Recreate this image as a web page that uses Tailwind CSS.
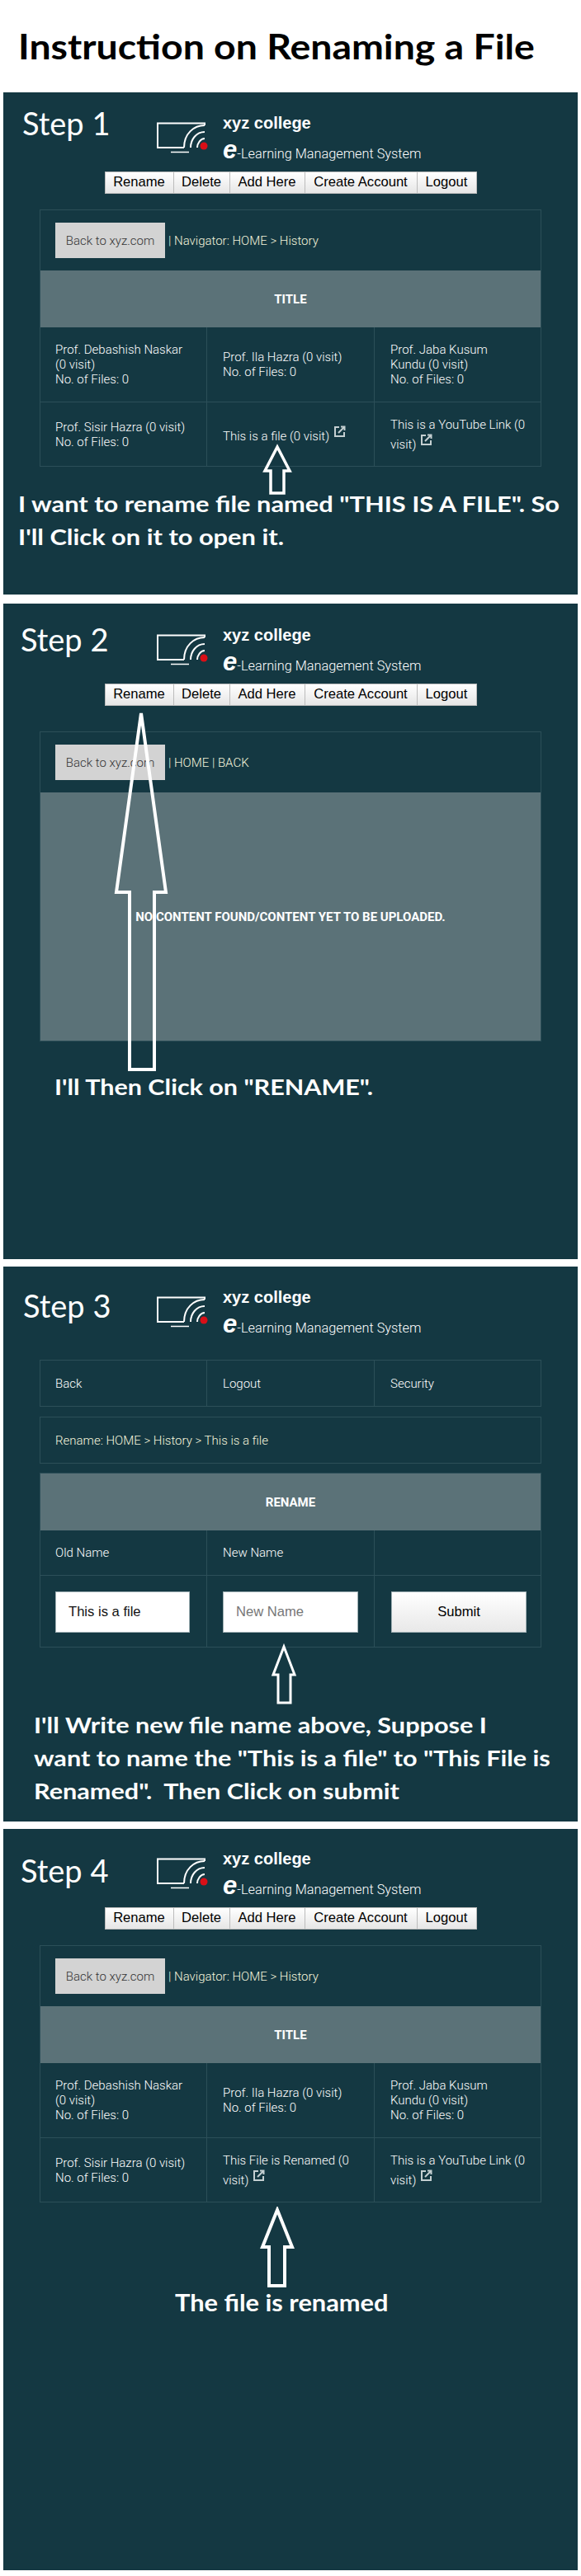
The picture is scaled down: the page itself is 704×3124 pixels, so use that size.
<!doctype html>
<html lang="en">
<head>
<meta charset="utf-8">
<title>Instruction on Renaming a File</title>
<script src="https://cdn.jsdelivr.net/npm/@tailwindcss/browser@4"></script>
</head>
<body class="bg-white w-[704px] font-['Roboto',sans-serif]">
<h1 class="h-[112px] pl-[22px] pt-[30px] font-['Lato',sans-serif] font-bold text-[42px] leading-[52px] text-black"><span class="block w-fit origin-left scale-x-[1.105] whitespace-nowrap">Instruction on Renaming a File</span></h1>

<!-- STEP 1 -->
<section class="relative ml-[4px] w-[696px] h-[609px] bg-[#143842] text-white pt-[25px]">
  <div class="flex h-[71px]">
    <div class="w-[186px] pl-[23px] -mt-[11px] font-['Lato',sans-serif] text-[38px] leading-[46px]">Step 1</div>
    <svg class="mt-[11px] w-[62px] h-[38px]" viewBox="0 0 62 38" fill="none" stroke="#fff"><path stroke-width="2" d="M58 4V1.500H1V31H33"/><path stroke-width="1.500" d="M17 36.500H39"/><path stroke-width="2" d="M33 31C33 14 45 4 58 4M41 31C41 21 48 12 58 12M49 31C49 26 53 20 58 20"/><circle cx="57" cy="29" r="4.500" fill="#d90f17" stroke="none"/></svg>
    <div class="ml-[18px]">
      <div class="font-['Liberation_Sans',sans-serif] font-bold text-[20px] leading-[24px]">xyz college</div>
      <div class="mt-[3px] flex items-baseline leading-[36px] text-[16.300px] font-light"><span class="font-['Liberation_Sans',sans-serif] italic font-bold text-[31px]">e</span><span>-Learning Management System</span></div>
    </div>
  </div>
  <nav class="flex justify-center font-['Liberation_Sans',sans-serif] text-[16.600px] text-black">
    <a class="w-[84px] h-[27px] leading-[24px] text-center border border-[#bcbcbc] bg-linear-to-b from-white to-[#e6e6e6]">Rename</a>
    <a class="w-[68px] h-[27px] leading-[24px] text-center border border-[#bcbcbc] border-l-0 bg-linear-to-b from-white to-[#e6e6e6]">Delete</a>
    <a class="w-[91px] h-[27px] leading-[24px] text-center border border-[#bcbcbc] border-l-0 bg-linear-to-b from-white to-[#e6e6e6]">Add Here</a>
    <a class="w-[136px] h-[27px] leading-[24px] text-center border border-[#bcbcbc] border-l-0 bg-linear-to-b from-white to-[#e6e6e6]">Create Account</a>
    <a class="w-[72px] h-[27px] leading-[24px] text-center border border-[#bcbcbc] border-l-0 bg-linear-to-b from-white to-[#e6e6e6]">Logout</a>
  </nav>
  <div class="mt-[19px] ml-[44px] w-[608px] border border-[#2c4f58] text-[15px] leading-[18px] font-light">
    <div class="h-[73px] pl-[18px] flex items-center text-[#f5f5dc]">
      <a class="w-[133px] h-[43px] bg-[#d3d3d3] text-[#333] flex items-center justify-center">Back to xyz.com</a>
      <span class="ml-[4px]">| Navigator: HOME &gt; History</span>
    </div>
    <div class="h-[69px] bg-[#5b7278] flex items-center justify-center font-bold text-[15px]">TITLE</div>
    <div class="grid grid-cols-[202px_203px_1fr]">
      <div class="h-[91px] px-[18px] border-r border-b border-[#2c4f58] flex items-center"><p>Prof. Debashish Naskar<br>(0 visit)<br>No. of Files: 0</p></div>
      <div class="h-[91px] px-[19px] border-r border-b border-[#2c4f58] flex items-center"><p>Prof. Ila Hazra (0 visit)<br>No. of Files: 0</p></div>
      <div class="h-[91px] px-[19px] border-b border-[#2c4f58] flex items-center"><p>Prof. Jaba Kusum<br>Kundu (0 visit)<br>No. of Files: 0</p></div>
      <div class="h-[77px] px-[18px] border-r border-[#2c4f58] flex items-center"><p>Prof. Sisir Hazra (0 visit)<br>No. of Files: 0</p></div>
      <div class="h-[77px] px-[19px] border-r border-[#2c4f58] flex items-center"><p class="whitespace-nowrap">This is a file (0 visit) <svg class="inline-block align-[3px] ml-[1px] w-[15px] h-[15px]" viewBox="0 0 15 15" fill="none" stroke="#c4cfd1" stroke-width="2"><path d="M7 2H2V13H13V8M6 9L13 2M9 1.500H13.500V6"/></svg></p></div>
      <div class="h-[77px] px-[19px] flex items-center"><p class="leading-[22px] whitespace-nowrap">This is a YouTube Link (0<br>visit) <svg class="inline-block align-[3px] ml-[1px] w-[15px] h-[15px]" viewBox="0 0 15 15" fill="none" stroke="#c4cfd1" stroke-width="2"><path d="M7 2H2V13H13V8M6 9L13 2M9 1.500H13.500V6"/></svg></p></div>
    </div>
  </div>
  <svg class="absolute left-[314px] top-[426px] w-[36px] h-[62px]" viewBox="0 0 36 62" fill="none" stroke="#fff" stroke-width="3.500"><path d="M18 4L33 33H26V60H10V33H3Z"/></svg>
  <div class="mt-[25px] pl-[18px] font-['Lato',sans-serif] font-bold text-[27.500px] leading-[40px]"><p class="w-fit origin-left scale-x-[1.12] whitespace-nowrap">I want to rename file named "THIS IS A FILE". So<br>I'll Click on it to open it.</p></div>
</section>

<!-- STEP 2 -->
<section class="relative mt-[11px] ml-[4px] w-[696px] h-[795px] bg-[#143842] text-white pt-[26px]">
  <div class="flex h-[71px]">
    <div class="w-[186px] pl-[21px] -mt-[6px] font-['Lato',sans-serif] text-[38px] leading-[46px]">Step 2</div>
    <svg class="mt-[11px] w-[62px] h-[38px]" viewBox="0 0 62 38" fill="none" stroke="#fff"><path stroke-width="2" d="M58 4V1.500H1V31H33"/><path stroke-width="1.500" d="M17 36.500H39"/><path stroke-width="2" d="M33 31C33 14 45 4 58 4M41 31C41 21 48 12 58 12M49 31C49 26 53 20 58 20"/><circle cx="57" cy="29" r="4.500" fill="#d90f17" stroke="none"/></svg>
    <div class="ml-[18px]">
      <div class="font-['Liberation_Sans',sans-serif] font-bold text-[20px] leading-[24px]">xyz college</div>
      <div class="mt-[3px] flex items-baseline leading-[36px] text-[16.300px] font-light"><span class="font-['Liberation_Sans',sans-serif] italic font-bold text-[31px]">e</span><span>-Learning Management System</span></div>
    </div>
  </div>
  <nav class="flex justify-center font-['Liberation_Sans',sans-serif] text-[16.600px] text-black">
    <a class="w-[84px] h-[27px] leading-[24px] text-center border border-[#bcbcbc] bg-linear-to-b from-white to-[#e6e6e6]">Rename</a>
    <a class="w-[68px] h-[27px] leading-[24px] text-center border border-[#bcbcbc] border-l-0 bg-linear-to-b from-white to-[#e6e6e6]">Delete</a>
    <a class="w-[91px] h-[27px] leading-[24px] text-center border border-[#bcbcbc] border-l-0 bg-linear-to-b from-white to-[#e6e6e6]">Add Here</a>
    <a class="w-[136px] h-[27px] leading-[24px] text-center border border-[#bcbcbc] border-l-0 bg-linear-to-b from-white to-[#e6e6e6]">Create Account</a>
    <a class="w-[72px] h-[27px] leading-[24px] text-center border border-[#bcbcbc] border-l-0 bg-linear-to-b from-white to-[#e6e6e6]">Logout</a>
  </nav>
  <div class="mt-[31px] ml-[44px] w-[608px] border border-[#2c4f58] text-[15px] leading-[18px] font-light">
    <div class="h-[73px] pl-[18px] flex items-center text-[#f5f5dc]">
      <a class="w-[133px] h-[43px] bg-[#d3d3d3] text-[#333] flex items-center justify-center">Back to xyz.com</a>
      <span class="ml-[4px]">| HOME | BACK</span>
    </div>
    <div class="h-[301px] bg-[#5b7278] flex items-center justify-center font-bold text-[15px]">NO CONTENT FOUND/CONTENT YET TO BE UPLOADED.</div>
  </div>
  <svg class="absolute left-[134px] top-[127px] w-[66px] h-[444px]" viewBox="0 0 66 444" fill="none" stroke="#fff" stroke-width="4"><path d="M33 6L63 223H49V438H19V223H3Z"/></svg>
  <div class="mt-[35px] pl-[62px] font-['Lato',sans-serif] font-bold text-[27.500px] leading-[40px]"><p class="w-fit origin-left scale-x-[1.11] whitespace-nowrap">I'll Then Click on "RENAME".</p></div>
</section>

<!-- STEP 3 -->
<section class="relative mt-[9px] ml-[4px] w-[696px] h-[673px] bg-[#143842] text-white pt-[25px]">
  <div class="flex h-[88px]">
    <div class="w-[186px] pl-[24px] -mt-[1px] font-['Lato',sans-serif] text-[38px] leading-[46px]">Step 3</div>
    <svg class="mt-[11px] w-[62px] h-[38px]" viewBox="0 0 62 38" fill="none" stroke="#fff"><path stroke-width="2" d="M58 4V1.500H1V31H33"/><path stroke-width="1.500" d="M17 36.500H39"/><path stroke-width="2" d="M33 31C33 14 45 4 58 4M41 31C41 21 48 12 58 12M49 31C49 26 53 20 58 20"/><circle cx="57" cy="29" r="4.500" fill="#d90f17" stroke="none"/></svg>
    <div class="ml-[18px]">
      <div class="font-['Liberation_Sans',sans-serif] font-bold text-[20px] leading-[24px]">xyz college</div>
      <div class="mt-[3px] flex items-baseline leading-[36px] text-[16.300px] font-light"><span class="font-['Liberation_Sans',sans-serif] italic font-bold text-[31px]">e</span><span>-Learning Management System</span></div>
    </div>
  </div>
  <div class="ml-[44px] w-[608px] text-[15px] leading-[18px] font-light">
    <div class="grid grid-cols-[202px_203px_1fr] border border-[#2c4f58] h-[57px]">
      <div class="px-[18px] border-r border-[#2c4f58] flex items-center">Back</div>
      <div class="px-[19px] border-r border-[#2c4f58] flex items-center">Logout</div>
      <div class="px-[19px] flex items-center">Security</div>
    </div>
    <div class="mt-[12px] h-[57px] border border-[#2c4f58] px-[18px] flex items-center text-[#f5f5dc]">Rename: HOME &gt; History &gt; This is a file</div>
    <div class="mt-[11px] border border-[#2c4f58]">
      <div class="h-[69px] bg-[#5b7278] flex items-center justify-center font-bold text-[15px]">RENAME</div>
      <div class="grid grid-cols-[202px_203px_1fr]">
        <div class="h-[55px] px-[18px] border-r border-b border-[#2c4f58] flex items-center">Old Name</div>
        <div class="h-[55px] px-[19px] border-r border-b border-[#2c4f58] flex items-center">New Name</div>
        <div class="h-[55px] border-b border-[#2c4f58]"></div>
        <div class="h-[86px] pl-[18px] border-r border-[#2c4f58] pt-[19px]"><div class="w-[163px] h-[50px] bg-white border border-[#9fb0b4] pl-[15px] flex items-center font-['Liberation_Sans',sans-serif] font-normal text-[16.600px] text-[#111]">This is a file</div></div>
        <div class="h-[86px] pl-[19px] border-r border-[#2c4f58] pt-[19px]"><div class="w-[164px] h-[50px] bg-white border border-[#9fb0b4] pl-[15px] flex items-center font-['Liberation_Sans',sans-serif] font-normal text-[16.600px] text-[#777]">New Name</div></div>
        <div class="h-[86px] pl-[20px] pt-[19px]"><div class="w-[164px] h-[50px] bg-linear-to-b from-white to-[#e8e8e8] border border-[#9fb0b4] flex items-center justify-center font-['Liberation_Sans',sans-serif] font-normal text-[16.600px] text-black">Submit</div></div>
      </div>
    </div>
  </div>
  <svg class="absolute left-[324px] top-[457px] w-[32px] h-[74px]" viewBox="0 0 32 74" fill="none" stroke="#fff" stroke-width="3"><path d="M16 4L29 38H24V72H9V38H3Z"/></svg>
  <div class="mt-[74px] pl-[37px] font-['Lato',sans-serif] font-bold text-[27.500px] leading-[40px]"><p class="w-fit whitespace-pre origin-left scale-x-[1.113]">I'll Write new file name above, Suppose I
want to name the "This is a file" to "This File is
Renamed".  Then Click on submit</p></div>
</section>

<!-- STEP 4 -->
<section class="relative mt-[9px] ml-[4px] w-[696px] h-[899px] bg-[#143842] text-white pt-[24px]">
  <div class="flex h-[71px]">
    <div class="w-[186px] pl-[21px] mt-[3px] font-['Lato',sans-serif] text-[38px] leading-[46px]">Step 4</div>
    <svg class="mt-[11px] w-[62px] h-[38px]" viewBox="0 0 62 38" fill="none" stroke="#fff"><path stroke-width="2" d="M58 4V1.500H1V31H33"/><path stroke-width="1.500" d="M17 36.500H39"/><path stroke-width="2" d="M33 31C33 14 45 4 58 4M41 31C41 21 48 12 58 12M49 31C49 26 53 20 58 20"/><circle cx="57" cy="29" r="4.500" fill="#d90f17" stroke="none"/></svg>
    <div class="ml-[18px]">
      <div class="font-['Liberation_Sans',sans-serif] font-bold text-[20px] leading-[24px]">xyz college</div>
      <div class="mt-[3px] flex items-baseline leading-[36px] text-[16.300px] font-light"><span class="font-['Liberation_Sans',sans-serif] italic font-bold text-[31px]">e</span><span>-Learning Management System</span></div>
    </div>
  </div>
  <nav class="flex justify-center font-['Liberation_Sans',sans-serif] text-[16.600px] text-black">
    <a class="w-[84px] h-[27px] leading-[24px] text-center border border-[#bcbcbc] bg-linear-to-b from-white to-[#e6e6e6]">Rename</a>
    <a class="w-[68px] h-[27px] leading-[24px] text-center border border-[#bcbcbc] border-l-0 bg-linear-to-b from-white to-[#e6e6e6]">Delete</a>
    <a class="w-[91px] h-[27px] leading-[24px] text-center border border-[#bcbcbc] border-l-0 bg-linear-to-b from-white to-[#e6e6e6]">Add Here</a>
    <a class="w-[136px] h-[27px] leading-[24px] text-center border border-[#bcbcbc] border-l-0 bg-linear-to-b from-white to-[#e6e6e6]">Create Account</a>
    <a class="w-[72px] h-[27px] leading-[24px] text-center border border-[#bcbcbc] border-l-0 bg-linear-to-b from-white to-[#e6e6e6]">Logout</a>
  </nav>
  <div class="mt-[19px] ml-[44px] w-[608px] border border-[#2c4f58] text-[15px] leading-[18px] font-light">
    <div class="h-[73px] pl-[18px] flex items-center text-[#f5f5dc]">
      <a class="w-[133px] h-[43px] bg-[#d3d3d3] text-[#333] flex items-center justify-center">Back to xyz.com</a>
      <span class="ml-[4px]">| Navigator: HOME &gt; History</span>
    </div>
    <div class="h-[69px] bg-[#5b7278] flex items-center justify-center font-bold text-[15px]">TITLE</div>
    <div class="grid grid-cols-[202px_203px_1fr]">
      <div class="h-[91px] px-[18px] border-r border-b border-[#2c4f58] flex items-center"><p>Prof. Debashish Naskar<br>(0 visit)<br>No. of Files: 0</p></div>
      <div class="h-[91px] px-[19px] border-r border-b border-[#2c4f58] flex items-center"><p>Prof. Ila Hazra (0 visit)<br>No. of Files: 0</p></div>
      <div class="h-[91px] px-[19px] border-b border-[#2c4f58] flex items-center"><p>Prof. Jaba Kusum<br>Kundu (0 visit)<br>No. of Files: 0</p></div>
      <div class="h-[77px] px-[18px] border-r border-[#2c4f58] flex items-center"><p>Prof. Sisir Hazra (0 visit)<br>No. of Files: 0</p></div>
      <div class="h-[77px] px-[19px] border-r border-[#2c4f58] flex items-center"><p class="leading-[22px] whitespace-nowrap">This File is Renamed (0<br>visit) <svg class="inline-block align-[3px] ml-[1px] w-[15px] h-[15px]" viewBox="0 0 15 15" fill="none" stroke="#c4cfd1" stroke-width="2"><path d="M7 2H2V13H13V8M6 9L13 2M9 1.500H13.500V6"/></svg></p></div>
      <div class="h-[77px] px-[19px] flex items-center"><p class="leading-[22px] whitespace-nowrap">This is a YouTube Link (0<br>visit) <svg class="inline-block align-[3px] ml-[1px] w-[15px] h-[15px]" viewBox="0 0 15 15" fill="none" stroke="#c4cfd1" stroke-width="2"><path d="M7 2H2V13H13V8M6 9L13 2M9 1.500H13.500V6"/></svg></p></div>
    </div>
  </div>
  <svg class="absolute left-[311px] top-[458px] w-[42px] h-[98px]" viewBox="0 0 42 98" fill="none" stroke="#fff" stroke-width="4"><path d="M21 4L39 49H30V96H11V49H3Z"/></svg>
  <div class="mt-[101px] pl-[208px] font-['Lato',sans-serif] font-bold text-[28.500px] leading-[40px]"><p class="w-fit origin-left scale-x-[1.08] whitespace-nowrap">The file is renamed</p></div>
</section>
</body>
</html>
